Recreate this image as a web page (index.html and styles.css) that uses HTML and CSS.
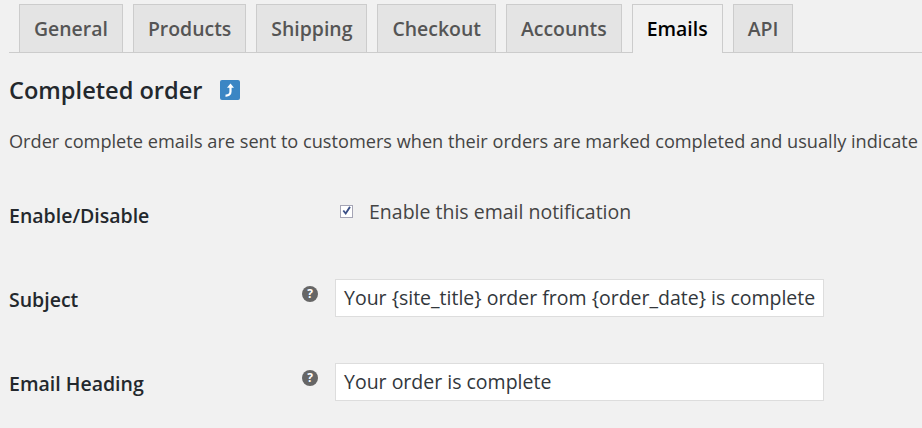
FILE: index.html

```html
<!DOCTYPE html>
<html lang="en">
<head>
    <meta charset="UTF-8">
    <meta name="viewport" content="width=device-width, initial-scale=1.0">
    <title>Emails settings</title>
    <link rel="stylesheet" href="styles.css">
</head>
<body>

<div class="tabs">
    <a class="tab">General</a>
    <a class="tab">Products</a>
    <a class="tab">Shipping</a>
    <a class="tab">Checkout</a>
    <a class="tab">Accounts</a>
    <a class="tab tab-active">Emails</a>
    <a class="tab">API</a>
</div>

<h2 class="title">
    Completed order
    <span class="back-link">
        <svg width="20" height="20" viewBox="0 0 20 20"><path d="M5.5 15.6c3 .2 5-1.2 5-4.2V7" fill="none" stroke="#fff" stroke-width="2.2"/><path d="M7 7.8l3.5-4.2 3.5 4.2z" fill="#fff"/></svg>
    </span>
</h2>

<p class="description">Order complete emails are sent to customers when their orders are marked completed and usually indicate</p>

<div class="form">
    <div class="row">
        <div class="label">Enable/Disable</div>
        <div class="help"></div>
        <label class="check-label">
            <span class="checkbox">
                <svg width="12" height="12" viewBox="0 0 12 12"><path d="M2.5 5.5l2.6 3.2L9.8 1.5" fill="none" stroke="#3a4f86" stroke-width="2"/></svg>
            </span>
            Enable this email notification
        </label>
    </div>
    <div class="row">
        <div class="label">Subject</div>
        <div class="help"><span class="help-icon">?</span></div>
        <div class="field">Your {site_title} order from {order_date} is complete</div>
    </div>
    <div class="row">
        <div class="label">Email Heading</div>
        <div class="help"><span class="help-icon">?</span></div>
        <div class="field">Your order is complete</div>
    </div>
</div>

</body>
</html>
```

FILE: styles.css

```css
html, body {
    overflow: hidden;
}
body {
    font-family: "Open Sans", Arial, sans-serif;
    margin: 0;
    padding: 0 0 0 9px;
    height: 428px;
    background-color: #f1f1f1;
    color: #444444;
}
.tabs {
    display: flex;
    gap: 10px;
    height: 48px;
    margin-top: 4px;
    padding-left: 10px;
    border-bottom: 1px solid #cccccc;
}
.tab {
    height: 47px;
    line-height: 48px;
    padding: 0 14px;
    border: 1px solid #cccccc;
    border-bottom: none;
    background-color: #e4e4e4;
    color: #555555;
    font-size: 19.43px;
    font-weight: 600;
}
.tab-active {
    height: 48px;
    background-color: #f1f1f1;
    color: #000000;
}
.title {
    display: flex;
    align-items: center;
    margin: 0;
    padding-top: 21px;
    height: 32px;
    font-size: 23.6px;
    font-weight: 600;
    color: #23282d;
}
.back-link {
    display: flex;
    width: 20px;
    height: 20px;
    margin-left: 17px;
    border-radius: 2px;
    background-color: #3b86c4;
}
.description {
    margin: 22px 0 0;
    font-size: 18.16px;
    line-height: 26px;
    white-space: nowrap;
}
.form {
    margin-top: 41px;
}
.row {
    display: flex;
    align-items: center;
    height: 38px;
    margin-bottom: 46px;
}
.label {
    width: 292px;
    flex-shrink: 0;
    padding-top: 2px;
    font-size: 19.5px;
    font-weight: 600;
    color: #23282d;
}
.help {
    width: 34px;
    flex-shrink: 0;
}
.help-icon {
    display: block;
    width: 16px;
    height: 16px;
    margin-top: -8px;
    margin-left: 1px;
    border-radius: 50%;
    background-color: #666666;
    color: #ffffff;
    font-size: 12px;
    font-weight: 700;
    line-height: 16px;
    text-align: center;
}
.check-label {
    display: flex;
    align-items: center;
    margin-left: 5px;
    margin-top: -6px;
    font-size: 19.5px;
}
.checkbox {
    display: flex;
    align-items: center;
    justify-content: center;
    width: 11px;
    height: 11px;
    margin-right: 16px;
    border: 1px solid #a5a5b5;
    background-color: #ffffff;
}
.field {
    box-sizing: border-box;
    width: 489px;
    height: 38px;
    padding: 0 8px;
    border: 1px solid #dddddd;
    background-color: #ffffff;
    color: #32373c;
    font-size: 19.5px;
    line-height: 36px;
    white-space: nowrap;
    overflow: hidden;
}
```
